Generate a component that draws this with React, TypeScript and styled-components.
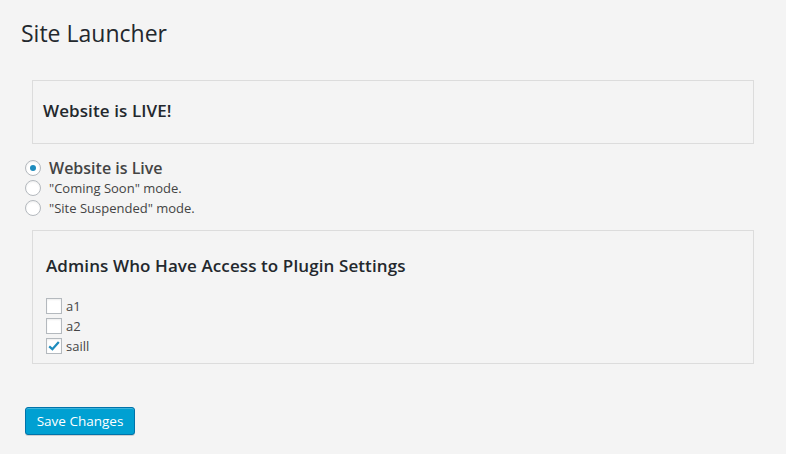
import React from "react";
import styled, { createGlobalStyle } from "styled-components";

const Global = createGlobalStyle`
  html, body { margin: 0; padding: 0; background: #f4f4f4; }
  body { font-family: "Open Sans", "Noto Sans", sans-serif; color: #444; width: 786px; height: 454px; overflow: hidden; }
  * { box-sizing: border-box; }
`;

const Wrap = styled.div`
  padding: 0 32px 0 21px;
  display: flex;
  flex-direction: column;
`;

const Title = styled.h1`
  margin: 0;
  padding-top: 19px;
  height: 80px;
  font-size: 23px;
  line-height: 29px;
  font-weight: 400;
  color: #23282d;
`;

const Panel = styled.div<{ $h: number; $px: number }>`
  margin-left: 11px;
  height: ${(p) => p.$h}px;
  border: 1px solid #dcdcdc;
  padding: 0 ${(p) => p.$px}px;
  display: flex;
  flex-direction: column;
`;

const PanelTitle = styled.h2<{ $size: number; $top: number }>`
  margin: ${(p) => p.$top}px 0 0;
  font-size: ${(p) => p.$size}px;
  line-height: 22px;
  font-weight: 600;
  letter-spacing: 0.1px;
  color: #23282d;
`;

const RadioList = styled.div`
  margin: 14px 0 12px 4px;
  display: flex;
  flex-direction: column;
`;

const Row = styled.label`
  display: flex;
  align-items: center;
  gap: 8px;
  height: 20px;
`;

const Radio = styled.span<{ $on?: boolean }>`
  width: 16px;
  height: 16px;
  border-radius: 50%;
  border: 1px solid #b4b9be;
  background: #fff;
  box-shadow: inset 0 1px 2px rgba(0, 0, 0, 0.07);
  display: flex;
  align-items: center;
  justify-content: center;
  flex: none;
  &::after {
    content: "";
    display: ${(p) => (p.$on ? "block" : "none")};
    width: 6px;
    height: 6px;
    border-radius: 50%;
    background: #1e8cbe;
  }
`;

const RadioText = styled.span<{ $big?: boolean }>`
  font-size: ${(p) => (p.$big ? 16 : 13)}px;
  font-weight: ${(p) => (p.$big ? 600 : 400)};
  color: #444;
  line-height: 20px;
`;

const CheckList = styled.div`
  margin-top: 21px;
  display: flex;
  flex-direction: column;
  gap: 4px;
`;

const CheckRow = styled.label`
  display: flex;
  align-items: center;
  gap: 4px;
  height: 16px;
  font-size: 13px;
  color: #444;
`;

const Box = styled.span`
  width: 16px;
  height: 16px;
  border: 1px solid #b4b9be;
  background: #fff;
  box-shadow: inset 0 1px 2px rgba(0, 0, 0, 0.07);
  display: flex;
  align-items: center;
  justify-content: center;
  flex: none;
`;

const Footer = styled.div`
  margin-top: 43px;
  margin-left: 4px;
`;

const Button = styled.button`
  width: 110px;
  height: 28px;
  padding: 0 8px 1px;
  border: 1px solid #0073aa;
  border-radius: 3px;
  background: #00a0d2;
  color: #fff;
  font-family: "Open Sans", "Noto Sans", sans-serif;
  font-size: 13.5px;
  line-height: 26px;
  box-shadow: inset 0 1px 0 rgba(120, 200, 230, 0.5), 0 1px 0 rgba(0, 0, 0, 0.15);
  cursor: pointer;
`;

const Check = () => (
  <svg width="14" height="14" viewBox="0 0 14 14">
    <path d="M2.2 7.4 L5.4 10.2 L11.8 3" fill="none" stroke="#1e8cbe" strokeWidth="2.2" strokeLinejoin="miter" />
  </svg>
);

const modes = [
  { label: "Website is Live", big: true, on: true },
  { label: '"Coming Soon" mode.', big: false, on: false },
  { label: '"Site Suspended" mode.', big: false, on: false },
];

const admins = [
  { name: "a1", on: false },
  { name: "a2", on: false },
  { name: "saill", on: true },
];

export default function App() {
  return (
    <>
      <Global />
      <Wrap>
        <Title>Site Launcher</Title>
        <Panel $h={64} $px={10}>
          <PanelTitle $size={17} $top={19}>Website is LIVE!</PanelTitle>
        </Panel>
        <RadioList>
          {modes.map((m) => (
            <Row key={m.label}>
              <Radio $on={m.on} />
              <RadioText $big={m.big}>{m.label}</RadioText>
            </Row>
          ))}
        </RadioList>
        <Panel $h={134} $px={13}>
          <PanelTitle $size={17} $top={24}>Admins Who Have Access to Plugin Settings</PanelTitle>
          <CheckList>
            {admins.map((a) => (
              <CheckRow key={a.name}>
                <Box>{a.on && <Check />}</Box>
                {a.name}
              </CheckRow>
            ))}
          </CheckList>
        </Panel>
        <Footer>
          <Button>Save Changes</Button>
        </Footer>
      </Wrap>
    </>
  );
}
